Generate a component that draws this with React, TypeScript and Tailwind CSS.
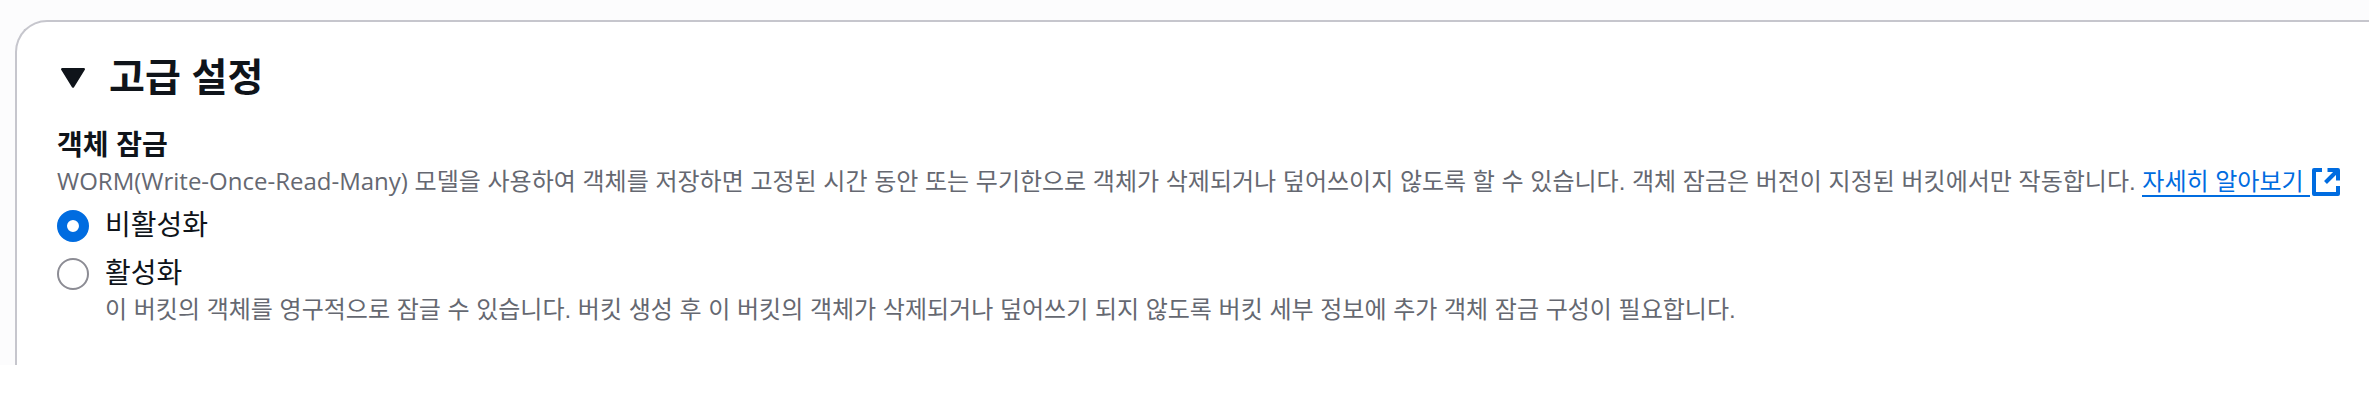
import { useState } from "react";

function CaretDown() {
  return (
    <svg viewBox="0 0 32 32" className="size-8 shrink-0" aria-hidden="true">
      <path d="M5.2 7.2h21.6L16 24.6z" fill="#0f141a" stroke="#0f141a" strokeWidth="2.4" strokeLinejoin="round" />
    </svg>
  );
}

function ExternalIcon() {
  return (
    <svg viewBox="0 0 32 32" className="-mt-1 inline size-8 align-middle" fill="none" stroke="currentColor" strokeWidth="4" strokeLinejoin="round" aria-hidden="true">
      <path d="M12 4H4v24h24v-8" />
      <path d="M17.5 4H28v10.5" />
      <path d="M28 4L15.5 16.5" />
    </svg>
  );
}

type OptionProps = {
  id: string;
  label: string;
  description?: string;
  checked: boolean;
  onSelect: () => void;
};

function RadioOption({ id, label, description, checked, onSelect }: OptionProps) {
  return (
    <div className="flex items-start gap-4">
      <input
        type="radio"
        id={id}
        name="object-lock"
        checked={checked}
        onChange={onSelect}
        aria-describedby={description ? `${id}-description` : undefined}
        className="mt-1 size-8 shrink-0 appearance-none rounded-full border-2 border-[#8c8c94] bg-white checked:border-[10px] checked:border-[#006ce0]"
      />
      <div>
        <label htmlFor={id} className="block text-[28px] leading-10">
          {label}
        </label>
        {description && (
          <p id={`${id}-description`} className="text-2xl leading-8 text-[#656871]">
            {description}
          </p>
        )}
      </div>
    </div>
  );
}

export default function App() {
  const [lock, setLock] = useState(false);
  const [open, setOpen] = useState(true);

  return (
    <main className="overflow-hidden bg-[#fcfcfd] pt-5 pl-[15px] font-['Liberation_Sans','Noto_Sans_CJK_KR',sans-serif] text-[#0f141a]">
      <section className="rounded-tl-[32px] border-t-2 border-l-2 border-[#c6c6cd] bg-white pt-8 pb-[39px] pl-10">
        <h2>
          <button type="button" aria-expanded={open} onClick={() => setOpen(!open)} className="flex items-center gap-5 text-[39px] leading-12 font-bold">
            <CaretDown />
            고급 설정
          </button>
        </h2>
        {open && (
          <fieldset className="mt-6">
            <legend className="text-[28px] leading-10 font-bold">객체 잠금</legend>
            <p className="text-2xl leading-8 text-[#656871]">
              <span className="font-['Open_Sans',sans-serif] leading-none">WORM(Write-Once-Read-Many)</span> 모델을 사용하여 객체를 저장하면 고정된 시간 동안 또는 무기한으로 객체가 삭제되거나 덮어쓰이지 않도록 할 수 있습니다. 객체 잠금은 버전이 지정된 버킷에서만 작동합니다.{" "}
              <a href="#object-lock" className="whitespace-nowrap text-[#006ce0]">
                <span className="border-b-2 border-[#006ce0] pr-1.5">자세히 알아보기</span>
                <ExternalIcon />
              </a>
            </p>
            <div className="mt-2 flex flex-col gap-2">
              <RadioOption id="lock-off" label="비활성화" checked={!lock} onSelect={() => setLock(false)} />
              <RadioOption
                id="lock-on"
                label="활성화"
                description="이 버킷의 객체를 영구적으로 잠글 수 있습니다. 버킷 생성 후 이 버킷의 객체가 삭제되거나 덮어쓰기 되지 않도록 버킷 세부 정보에 추가 객체 잠금 구성이 필요합니다."
                checked={lock}
                onSelect={() => setLock(true)}
              />
            </div>
          </fieldset>
        )}
      </section>
    </main>
  );
}
